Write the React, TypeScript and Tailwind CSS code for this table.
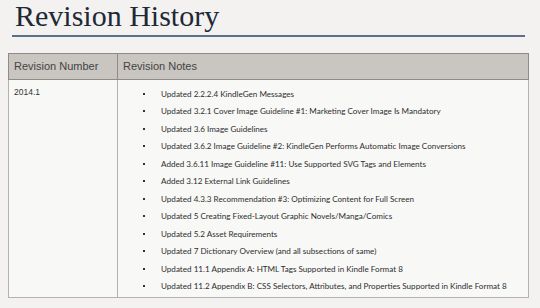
const notes = [
  "Updated 2.2.2.4 KindleGen Messages",
  "Updated 3.2.1 Cover Image Guideline #1: Marketing Cover Image Is Mandatory",
  "Updated 3.6 Image Guidelines",
  "Updated 3.6.2 Image Guideline #2: KindleGen Performs Automatic Image Conversions",
  "Added 3.6.11 Image Guideline #11: Use Supported SVG Tags and Elements",
  "Added 3.12 External Link Guidelines",
  "Updated 4.3.3 Recommendation #3: Optimizing Content for Full Screen",
  "Updated 5 Creating Fixed-Layout Graphic Novels/Manga/Comics",
  "Updated 5.2 Asset Requirements",
  "Updated 7 Dictionary Overview (and all subsections of same)",
  "Updated 11.1 Appendix A: HTML Tags Supported in Kindle Format 8",
  "Updated 11.2 Appendix B: CSS Selectors, Attributes, and Properties Supported in Kindle Format 8",
];

export default function App() {
  return (
    <div className="h-[308px] w-[540px] overflow-hidden bg-[#f3f2f1] pt-[1px]">
      <div className="pl-[15px]">
        <h1 className="text-[30px] leading-[30px] text-[#1f2835] [font-family:'Liberation_Serif',serif]">
          Revision History
        </h1>
      </div>
      <div className="ml-[12px] mt-[4px] h-[2px] w-[513px] bg-[#5b6f85]" />

      <div className="ml-[8px] mt-[16px] w-[521px] [font-family:'Liberation_Sans',Arial,sans-serif]">
        <div className="grid h-[27px] grid-cols-[109px_1fr] border border-[#8e8b88] bg-[#c9c5c0] text-[11px] text-[#444]">
          <div className="flex items-center border-r border-[#8e8b88] pl-[5px]">Revision Number</div>
          <div className="flex items-center pl-[5px]">Revision Notes</div>
        </div>
        <div className="grid h-[218px] grid-cols-[109px_1fr] border-x border-b border-[#b4b2b0] bg-[#f8f8f7]">
          <div className="border-r border-[#b4b2b0] pl-[5px] pt-[7px] text-[8.5px] leading-[11px] text-[#333]">
            2014.1
          </div>
          <ul className="pt-[5px] [font-family:Lato,sans-serif]">
            {notes.map((note) => (
              <li key={note} className="flex h-[17.5px] items-center text-[8.1px] text-[#2e2e2e]">
                <span className="ml-[25px] mr-[16px] h-[2px] w-[2px] shrink-0 bg-[#333]" />
                <span className="whitespace-nowrap">{note}</span>
              </li>
            ))}
          </ul>
        </div>
      </div>
    </div>
  );
}
